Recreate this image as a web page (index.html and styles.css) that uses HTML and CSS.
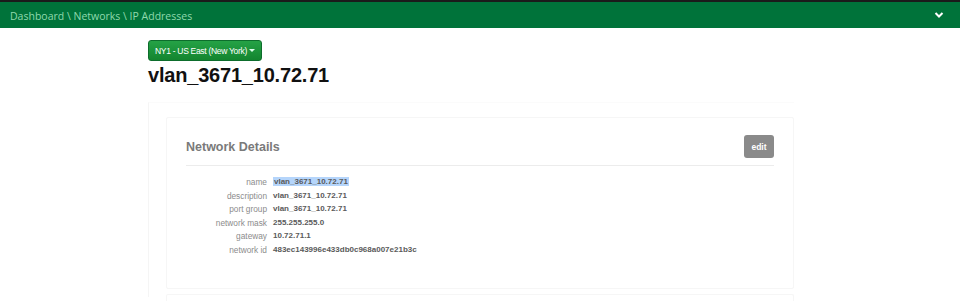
FILE: index.html
```html
<html>
<head>
  <meta charset="utf-8">
  <link rel="stylesheet" href="styles.css">
</head>
<body>
<div class="topbar">
  <div class="crumbs">Dashboard \ Networks \ IP Addresses</div>
  <svg class="chev" width="10" height="8" viewBox="0 0 10 8"><path d="M1.5 2 L5 5.5 L8.5 2" fill="none" stroke="#fff" stroke-width="2"/></svg>
</div>
<div class="page">
  <button class="region">NY1 - US East (New York) <span class="caret"></span></button>
  <h1>vlan_3671_10.72.71</h1>
  <div class="outer">
    <div class="card">
      <div class="card-head">
        <h2>Network Details</h2>
        <button class="edit">edit</button>
      </div>
      <div class="details">
        <div class="lbl">name</div><div class="val"><span class="sel">vlan_3671_10.72.71</span></div>
        <div class="lbl">description</div><div class="val">vlan_3671_10.72.71</div>
        <div class="lbl">port group</div><div class="val">vlan_3671_10.72.71</div>
        <div class="lbl">network mask</div><div class="val">255.255.255.0</div>
        <div class="lbl">gateway</div><div class="val">10.72.71.1</div>
        <div class="lbl">network id</div><div class="val">483ec143996e433db0c968a007e21b3c</div>
      </div>
    </div>
    <div class="card next"></div>
  </div>
</div>
</body>
</html>
```

FILE: styles.css
```css
body {
  margin: 0;
  background: #fff;
  font-family: "Liberation Sans", Arial, sans-serif;
  overflow: hidden;
}
.topbar {
  height: 26px;
  border-top: 2px solid #1b1b1b;
  background: #00733a;
  display: flex;
  align-items: center;
  justify-content: space-between;
  padding: 0 16px 0 10px;
}
.crumbs {
  font-family: "Open Sans", sans-serif;
  font-size: 10.5px;
  color: #8fd9ad;
  margin-top: 1px;
}
.chev { display: block; }
.page {
  padding: 12px 0 0 148px;
  width: 646px;
}
.region {
  display: block;
  height: 21px;
  padding: 0 6px;
  border: 1px solid #0d6d2c;
  border-radius: 3px;
  background: linear-gradient(#25a246, #13852f);
  color: #fff;
  font-family: "Liberation Sans", Arial, sans-serif;
  font-size: 8.5px;
  letter-spacing: -0.3px;
}
.caret {
  display: inline-block;
  border-left: 3px solid transparent;
  border-right: 3px solid transparent;
  border-top: 3px solid #dfe;
  vertical-align: 2px;
}
h1 {
  margin: 3px 0 0;
  font-size: 20px;
  font-weight: bold;
  letter-spacing: -0.2px;
  color: #111;
}
.outer {
  margin-top: 15px;
  border-left: 1px solid #f5f5f5;
  border-top: 1px solid #fbfbfb;
  padding: 14px 0 0 17px;
  height: 180px;
}
.card {
  border: 1px solid #f6f6f6;
  border-radius: 2px;
  padding: 17px 19px 0 19px;
  height: 153px;
}
.card.next {
  margin-top: 5px;
  height: 8px;
  padding: 0;
  border-bottom: none;
}
.card-head {
  display: flex;
  justify-content: space-between;
  align-items: center;
  padding-bottom: 7px;
  border-bottom: 1px solid #ececec;
}
h2 {
  margin: 0;
  font-size: 12.5px;
  color: #7a7a7a;
  font-weight: bold;
}
.edit {
  width: 30px;
  height: 23px;
  border: none;
  border-radius: 3px;
  background: #8a8a8a;
  color: #fff;
  font-family: "Liberation Sans", Arial, sans-serif;
  font-size: 8.5px;
  font-weight: bold;
  padding: 0;
}
.details {
  display: grid;
  grid-template-columns: 81px auto;
  column-gap: 6px;
  row-gap: 3.5px;
  margin-top: 11px;
  font-size: 8.3px;
  line-height: 10px;
}
.lbl {
  text-align: right;
  color: #8c8c8c;
}
.val {
  color: #5a5a5a;
  font-weight: bold;
  font-size: 8px;
}
.sel {
  background: #b5d5fb;
  padding: 0 1px;
}
```
